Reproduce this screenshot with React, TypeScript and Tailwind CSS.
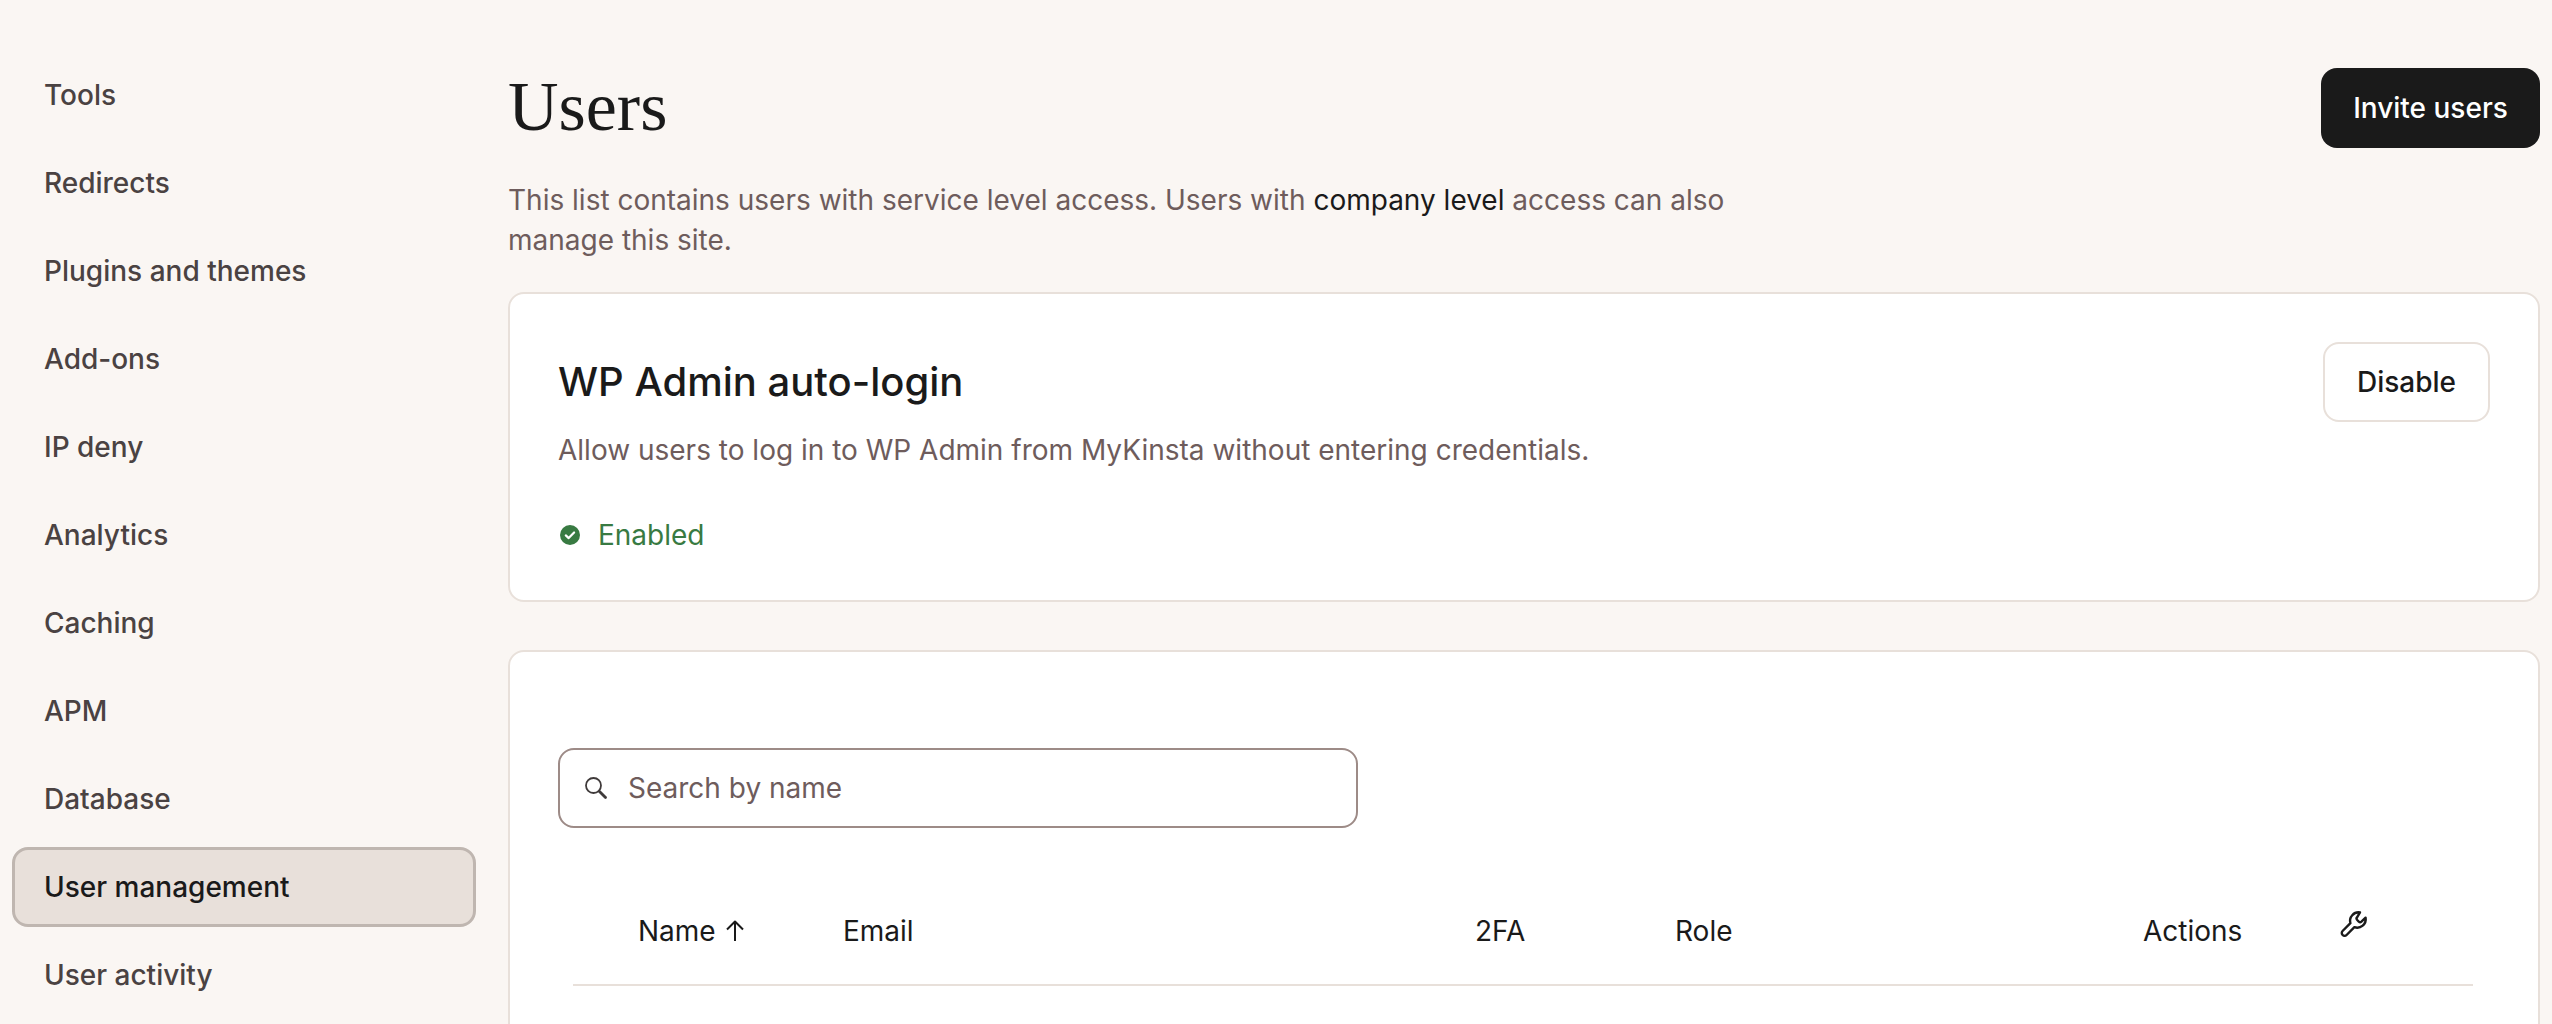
const navItems = [
  "Tools",
  "Redirects",
  "Plugins and themes",
  "Add-ons",
  "IP deny",
  "Analytics",
  "Caching",
  "APM",
  "Database",
  "User management",
  "User activity",
];

function SearchIcon() {
  return (
    <svg width="24" height="24" viewBox="0 0 24 24" fill="none" className="shrink-0 text-[#3f3a3a]">
      <circle cx="9.5" cy="9.5" r="7.5" stroke="currentColor" strokeWidth="1.8" />
      <path d="M15.5 15.5l6 6" stroke="currentColor" strokeWidth="2.8" strokeLinecap="round" />
    </svg>
  );
}

function SortArrow() {
  return (
    <svg width="18" height="22" viewBox="0 0 18 22" fill="none" className="shrink-0 text-[#1a1a1a]">
      <path d="M9 21V1.5M1 9.5l8-8 8 8" stroke="currentColor" strokeWidth="2" strokeLinejoin="round" />
    </svg>
  );
}

function CheckBadge() {
  return (
    <svg width="20" height="20" viewBox="0 0 20 20" className="ml-[2px] shrink-0">
      <circle cx="10" cy="10" r="10" fill="#387a42" />
      <path d="M5.8 10.4l2.9 2.7 5.4-5.6" fill="none" stroke="#fff" strokeWidth="2.2" strokeLinecap="round" strokeLinejoin="round" />
    </svg>
  );
}

function WrenchIcon() {
  return (
    <svg width="28" height="28" viewBox="0 0 28 28" fill="none" className="text-[#1a1a1a]">
      <path
        d="M20 2.4a8.6 8.6 0 0 0-9.6 10.8L2.6 21a2.8 2.8 0 0 0 4 4l7.8-7.8A8.6 8.6 0 0 0 25.6 7.6l-4.2 4a2 2 0 0 1-2.6 0l-1.6-1.6a2 2 0 0 1 0-2.8z"
        stroke="currentColor"
        strokeWidth="2.4"
        strokeLinejoin="round"
      />
    </svg>
  );
}

export default function App() {
  return (
    <div className="h-screen overflow-hidden bg-[#faf6f3] font-['Inter',sans-serif] flex">
      <aside className="w-[508px] shrink-0 pl-3 pr-8 pt-[55px]">
        <nav className="flex flex-col gap-2">
          {navItems.map((item) => {
            const active = item === "User management";
            return (
              <a
                key={item}
                className={
                  active
                    ? "h-20 flex items-center px-[29px] rounded-2xl border-[3px] border-[#bfb6b0] bg-[#e8e0da] text-[28px] font-medium text-[#1a1a1a]"
                    : "h-20 flex items-center px-8 text-[28px] font-medium text-[#4a4242]"
                }
              >
                {item}
              </a>
            );
          })}
        </nav>
      </aside>

      <main className="flex-1 pr-3 pt-[68px]">
        <div className="flex items-start justify-between">
          <h1 className="font-['Liberation_Serif',serif] text-[70px] leading-[78px] text-[#1a1a1a]">Users</h1>
          <button className="h-20 w-[219px] rounded-2xl bg-[#1a1a1a] text-[28px] font-medium text-white">
            Invite users
          </button>
        </div>

        <p className="mt-[32px] max-w-[1260px] text-[28px] leading-10 text-[#6e5c5c]">
          This list contains users with service level access. Users with{" "}
          <span className="text-[#1a1a1a]">company level</span> access can also manage this site.
        </p>

        <section className="mt-[32px] h-[310px] rounded-2xl border-2 border-[#e8e0da] bg-white p-12">
          <div className="flex items-start justify-between">
            <div>
              <h2 className="mt-[16px] text-[40px] leading-[48px] font-medium text-[#1a1a1a]">WP Admin auto-login</h2>
              <p className="mt-[24px] text-[28px] leading-10 text-[#6e5c5c]">
                Allow users to log in to WP Admin from MyKinsta without entering credentials.
              </p>
              <div className="mt-[45px] flex items-center gap-[18px] text-[28px] leading-10 text-[#387a42]">
                <CheckBadge />
                Enabled
              </div>
            </div>
            <button className="h-20 w-[167px] rounded-2xl border-2 border-[#e8e0da] bg-white text-[28px] font-medium text-[#1a1a1a]">
              Disable
            </button>
          </div>
        </section>

        <section className="mt-12 rounded-2xl border-2 border-[#e8e0da] bg-white px-12 pt-[96px] h-[600px]">
          <div className="flex h-20 w-[800px] items-center gap-5 rounded-2xl border-2 border-[#9d8b87] px-[24px] text-[28px] text-[#6e5c5c]">
            <SearchIcon />
            Search by name
          </div>
          <div className="ml-[15px] mr-[17px] mt-[50px] grid h-[108px] grid-cols-[205px_632px_200px_468px_197px_1fr] items-center border-b-2 border-[#e8e0da] pl-[65px] text-[28px] text-[#1a1a1a]">
            <div className="flex items-center gap-[10px]">
              Name <SortArrow />
            </div>
            <div>Email</div>
            <div>2FA</div>
            <div>Role</div>
            <div>Actions</div>
            <div className="-mt-[14px]">
              <WrenchIcon />
            </div>
          </div>
        </section>
      </main>
    </div>
  );
}
